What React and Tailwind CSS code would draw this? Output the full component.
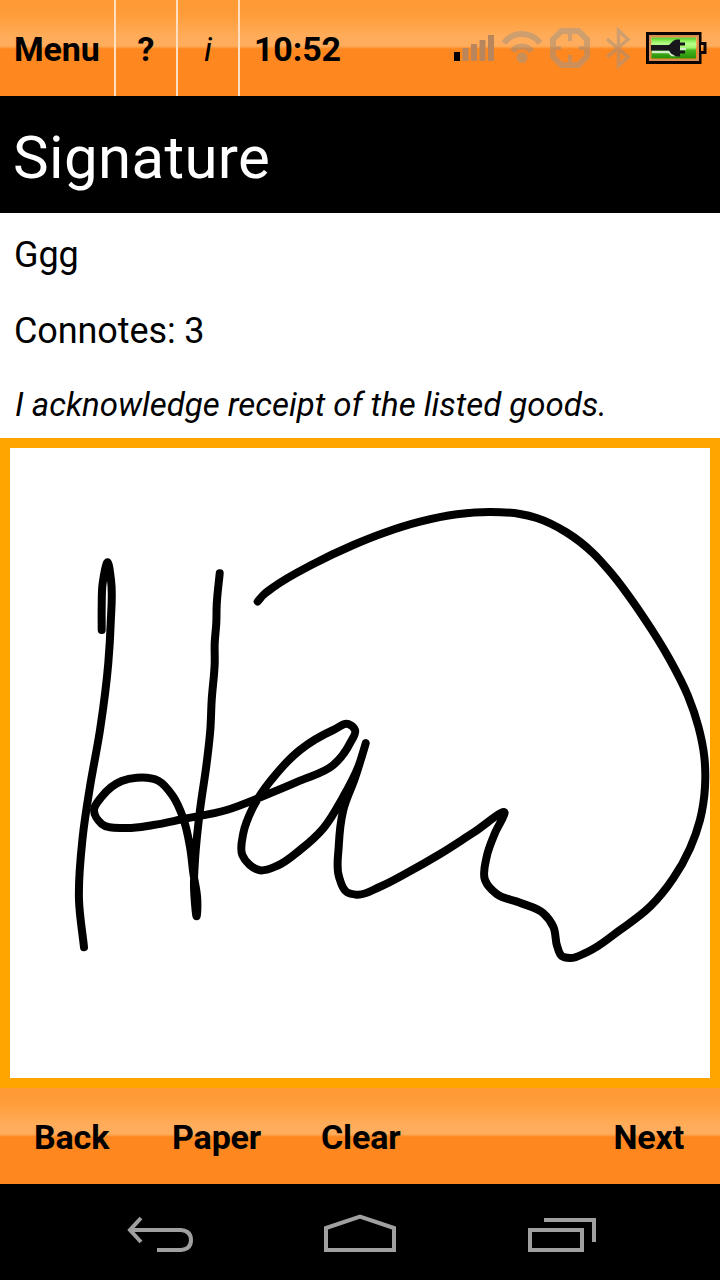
const STROKES = [
  [[101.7,630],[101.7,606.7],[102.7,583],[107.7,562.3],[111,580],[110.7,623],[108.3,663],[100,730],[90,786.7],[82.7,837],[79,900],[84,947.3]],
  [[219.7,573.3],[216.7,605],[216.3,623],[214.7,643],[214.7,663],[211.7,700],[210.3,730],[206.7,763],[200,810],[195,860],[194,886.7],[196.7,916],[197.3,900],[193.3,873],[190,846.7],[182.7,816.7],[173.3,796.7],[158.3,780.7],[136.7,777.7],[121.7,781],[101.7,796.7],[94,810],[101.7,824],[125,828],[153.3,825],[183.3,819],[226.7,810],[261.7,796.7],[300,780.7],[333.3,765],[350,743.3],[355,730],[348.3,724],[333.3,730],[300,750],[276.7,773.3],[253.3,806.7],[243.3,833.3],[242.3,855],[260,870.3],[276.7,866],[300,850],[323.3,828.3],[343.3,796.7],[358.3,766.7],[365.7,743.3],[355,778],[343.3,810],[338.7,846.7],[339,876.7],[346.7,892],[356.7,894.7],[380,886.7],[406.7,873],[440,854],[473.3,832.7],[504.7,812.7],[495,833],[486.7,856.7],[485,880],[496.7,894],[520,902.7],[543.3,913.3],[553.3,926.7],[557.3,946.7],[561.7,956],[570,958],[586.7,952.3],[620,930],[650,906.7],[673.3,878.3],[690,848.3],[700,820],[705,786.7],[704.3,756.7],[698.5,727],[688,696],[670,660],[643,616.500],[610,571.7],[593.3,553.3],[566.7,532.500],[536.7,518],[520,514],[490,512],[456.7,514.3],[420,521.7],[385,532.5],[353.3,545],[313.3,564],[273.3,587.3],[263.3,595],[257.7,601.5]],
];

function tangent(a, b, c) {
  const l1 = Math.hypot(b[0] - a[0], b[1] - a[1]);
  const l2 = Math.hypot(c[0] - b[0], c[1] - b[1]);
  if (!l1 || !l2) return [0, 1].map((i) => (c[i] - a[i]) / (l1 + l2));
  return [0, 1].map((i) => (((b[i] - a[i]) / l1) * l2 + ((c[i] - b[i]) / l2) * l1) / (l1 + l2));
}

function smooth(p) {
  let d = `M${p[0][0]} ${p[0][1]}`;
  for (let i = 0; i < p.length - 1; i++) {
    const b = p[i];
    const c = p[i + 1];
    const t1 = tangent(p[i - 1] || b, b, c);
    const t2 = tangent(b, c, p[i + 2] || c);
    const k = Math.hypot(c[0] - b[0], c[1] - b[1]) * 0.35;
    d += `C${b[0] + t1[0] * k} ${b[1] + t1[1] * k} ${c[0] - t2[0] * k} ${c[1] - t2[1] * k} ${c[0]} ${c[1]}`;
  }
  return d;
}

const BAR = "h-24 shrink-0 bg-[linear-gradient(to_bottom,#ff9933_0px,#ff9c38_14px,#ffad5c_38px,#ffad5c_46px,#ff871f_49px,#ff871f_100%)] font-bold text-[34px] leading-none tracking-[-0.15px] text-black";

function StatusIcons() {
  return (
    <svg className="h-24 w-[280px]" viewBox="440 0 280 96">
      <path d="M454 52h6v9h-6z" />
      <path fill="#b8855c" d="M462.500 48h6v13h-6zM471 44h6v17h-6zM479.500 40h6v21h-6zM488 35h6v26h-6z" />
      <defs>
        <linearGradient id="mute" gradientUnits="userSpaceOnUse" x1="0" y1="28" x2="0" y2="68">
          <stop offset="0" stopColor="#ce9f6f" />
          <stop offset="0.45" stopColor="#cf9d6c" />
          <stop offset="0.52" stopColor="#ca8a52" />
          <stop offset="1" stopColor="#ce9059" />
        </linearGradient>
        <linearGradient id="charge" x1="0" y1="0" x2="0" y2="1">
          <stop offset="0" stopColor="#57c72b" />
          <stop offset="0.15" stopColor="#8aec55" />
          <stop offset="0.3" stopColor="#b9ff8b" />
          <stop offset="0.48" stopColor="#a0f56c" />
          <stop offset="0.62" stopColor="#43b51c" />
          <stop offset="1" stopColor="#279009" />
        </linearGradient>
      </defs>
      <g fill="none" stroke="url(#mute)">
        <path d="M504 43A22.500 22.500 0 0 1 540 43" strokeWidth="6" />
        <path d="M512.500 51.500A11.500 11.500 0 0 1 531.500 51.500" strokeWidth="6" />
        <path d="M561.500 31h17l8.500 8.500v17l-8.500 8.500h-17l-8.500-8.500v-17z" strokeWidth="6" />
        <path d="M570 32v9M570 55v9M553 48h8M579 48h8" strokeWidth="4" />
        <path d="M607 39L628 57L618.500 65.500V30.500L628 39.500L607 57" strokeWidth="3.500" />
      </g>
      <circle cx="522" cy="57.500" r="5.500" fill="#ca8f57" />
      <path d="M647.500 33.500H700V43.500H705V52.500H700V62.500H647.500Z" fill="none" stroke="#0b0400" strokeWidth="3" />
      <path d="M700 43v10" stroke="#0b0400" strokeWidth="2" />
      <path d="M650 36h48v24h-48z" fill="none" stroke="#d98e51" strokeWidth="2" />
      <path d="M651.500 37.500h44.500v21h-44.500z" fill="url(#charge)" />
      <path d="M652 52h17l3 3h7M680 49h6" stroke="#d5eccb" strokeWidth="2.500" fill="none" />
      <path d="M651 45h18l4-4 3-1.500h4v3h5v3h-5v5h5v3h-5v3h-4l-5-3-2-3h-18z" fill="#17171c" />
    </svg>
  );
}

export default function App() {
  return (
    <div className="flex h-[1280px] w-[720px] flex-col overflow-hidden bg-white font-['Roboto',sans-serif] text-black">
      <header className={`flex ${BAR}`}>
        <div className="flex w-[116px] items-center border-r-2 border-[#ffdfc0] pt-0.5 pl-3.5"><span>Menu</span></div>
        <div className="flex w-[62px] items-center justify-center border-r-2 border-[#ffdfc0] pt-0.5">?</div>
        <div className="flex w-[62px] items-center justify-center border-r-2 border-[#ffdfc0] pt-0.5 font-normal italic">i</div>
        <div className="flex flex-1 items-center pt-0.5 pl-3.5"><span>10:52</span></div>
        <StatusIcons />
      </header>
      <h1 className="flex h-[117px] shrink-0 items-center bg-black pt-1.5 pl-[13px] text-[60px] leading-none tracking-[0.35px] text-white"><span>Signature</span></h1>
      <main className="flex flex-1 flex-col">
        <div className="flex h-[225px] flex-col pl-3.5 text-[36px] leading-none tracking-[-0.1px]">
          <p className="mt-6"><span>Ggg</span></p>
          <p className="mt-10"><span>Connotes: 3</span></p>
          <p className="mt-[39px] pl-px text-[33px] tracking-[-0.02px] italic"><span>I acknowledge receipt of the listed goods.</span></p>
        </div>
        <div className="flex-1 border-10 border-[#ffa500]">
          <svg className="block h-[630px] w-[700px]" viewBox="10 448 700 630" fill="none" stroke="#000" strokeWidth="8" strokeLinecap="round" strokeLinejoin="round">
            {STROKES.map((s, i) => <path key={i} d={smooth(s)} />)}
          </svg>
        </div>
      </main>
      <footer className={`flex items-center pt-0.5 pr-9 pl-[34px] ${BAR}`}>
        <button className="w-[138px] text-left"><span>Back</span></button>
        <button className="w-[149px] text-left"><span>Paper</span></button>
        <button className="text-left"><span>Clear</span></button>
        <button className="ml-auto"><span>Next</span></button>
      </footer>
      <nav className="flex h-24 shrink-0 bg-black">
        <svg className="h-24 w-[720px]" viewBox="0 1184 720 96" fill="none" stroke="#a0a0a0" strokeWidth="4">
          <path d="M130 1230H181Q191 1231 191 1240T181 1250H157M141 1218L130 1230L141 1242" />
          <path d="M326 1250V1228L360 1216.500L394 1228V1250Z" />
          <path d="M530 1230H582V1250H530ZM544 1220H594V1242" />
        </svg>
      </nav>
    </div>
  );
}
